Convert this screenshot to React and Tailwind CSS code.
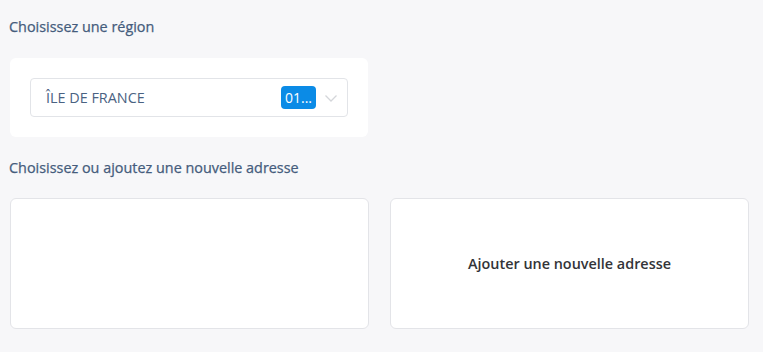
export default function App() {
  return (
    <div
      className="min-h-screen bg-[#f7f7f9] px-[10px] pt-[17px]"
      style={{ fontFamily: '"Open Sans", sans-serif' }}
    >
      {/* Région */}
      <h2 className="text-[14.4px] leading-[20px] text-[#455c7c] -ml-px [-webkit-text-stroke:0.25px_#455c7c]">
        Choisissez une région
      </h2>
      <div className="mt-[21px] w-[358px] h-[79px] bg-white rounded-[6px] px-[20px] pt-[20px]">
        <div className="h-[39px] border border-[#e2e4e8] rounded-[4px] flex items-center pl-[15px] pr-[9px]">
          <span className="flex-1 text-[14.4px] text-[#4a6282]">ÎLE DE FRANCE</span>
          <span className="h-[23px] px-[4px] rounded-[4px] bg-[#0b8be6] text-white text-[14px] leading-[23px]">
            01...
          </span>
          <svg width="14" height="14" viewBox="0 0 14 14" className="ml-[8px]">
            <path d="M1.5 4.5l5.5 5.5 5.5-5.5" fill="none" stroke="#d4d6da" strokeWidth="1.3" />
          </svg>
        </div>
      </div>

      {/* Adresses */}
      <h2 className="mt-[21px] text-[14.4px] leading-[20px] text-[#455c7c] -ml-px [-webkit-text-stroke:0.25px_#455c7c]">
        Choisissez ou ajoutez une nouvelle adresse
      </h2>
      <div className="mt-[20px] flex gap-[21px]">
        <div className="w-[359px] h-[131px] bg-white border border-[#e3e4e8] rounded-[6px]" />
        <div className="w-[359px] h-[131px] bg-white border border-[#e3e4e8] rounded-[6px] flex items-center justify-center">
          <span className="text-[14.4px] font-semibold text-[#333438]">Ajouter une nouvelle adresse</span>
        </div>
      </div>
    </div>
  );
}
